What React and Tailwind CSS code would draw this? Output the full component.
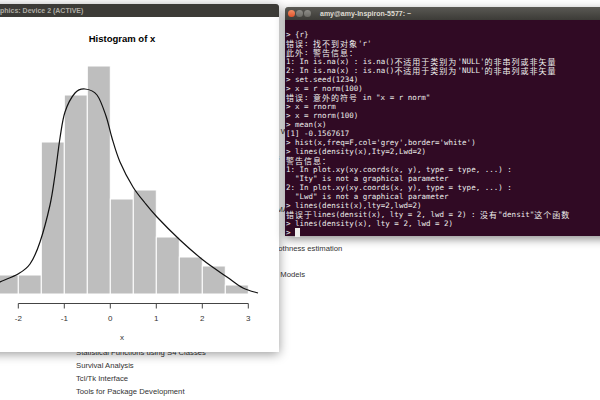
import React from "react";

// terminal scrollback, top to bottom
const termLines = [
  "> {r}",
  "错误: 找不到对象'r'",
  "此外: 警告信息：",
  "1: In is.na(x) : is.na()不适用于类别为'NULL'的非串列或非矢量",
  "2: In is.na(x) : is.na()不适用于类别为'NULL'的非串列或非矢量",
  "> set.seed(1234)",
  "> x = r norm(100)",
  '错误: 意外的符号 in "x = r norm"',
  "> x = rnorm",
  "> x = rnorm(100)",
  "> mean(x)",
  "[1] -0.1567617",
  "> hist(x,freq=F,col='grey',border='white')",
  "> lines(density(x),Ity=2,Lwd=2)",
  "警告信息：",
  "1: In plot.xy(xy.coords(x, y), type = type, ...) :",
  '  "Ity" is not a graphical parameter',
  "2: In plot.xy(xy.coords(x, y), type = type, ...) :",
  '  "Lwd" is not a graphical parameter',
  "> lines(densit(x),lty=2,lwd=2)",
  '错误于lines(densit(x), lty = 2, lwd = 2) : 没有"densit"这个函数',
  "> lines(density(x), lty = 2, lwd = 2)",
];

// R help index rows behind the windows
const helpRows = [
  "Read Data Stored by Minitab, S, SAS, SPSS, Stata, Systat, Weka, dBase",
  "The R Graphics Package",
  "The R Graphics Devices and Support for Colours and Fonts",
  "The Grid Graphics Package",
  "Functions for kernel smoothing",
  "Lattice Graphics",
  "Support Functions and Datasets for Venables and Ripley's MASS",
  "Sparse and Dense Matrix Classes and Methods",
  "Formal Methods and Classes",
  "Mixed GAM Computation Vehicle with GCV/AIC/REML smoothness estimation",
  "Linear and Nonlinear Mixed Effects Models",
  "Feed-Forward Neural Networks and Multinomial Log-Linear Models",
  "Support for Parallel computation in R",
  "Recursive Partitioning and Regression Trees",
  "Functions for Kriging and Point Pattern Analysis",
  "Regression Spline Functions and Classes",
  "The R Stats Package",
  "Statistical Functions using S4 Classes",
  "Survival Analysis",
  "Tcl/Tk Interface",
  "Tools for Package Development",
];

const CJK = /([\u3000-\u303f\u4e00-\u9fff\uff00-\uffef]+)/;

const X0 = 110.3;
const UNIT = 46;
const BASE = 294;
const sx = (v) => X0 + v * UNIT;

// [left break, bar top]
const bins = [
  [-2.5, 275], [-2, 275], [-1.5, 142], [-1, 95], [-0.5, 66], [0, 199],
  [0.5, 190], [1, 237], [1.5, 257], [2, 266], [2.5, 285],
];

const densityPts = [
  [-8, 287], [0, 282], [18, 274], [30, 264], [40, 242], [50, 205], [55, 175],
  [60, 138], [65, 112], [75, 93], [85, 89], [97, 95], [106, 116], [112, 138],
  [120, 162], [133, 187], [145, 203], [157, 217], [180, 240], [203, 260],
  [227, 277], [243, 288], [258, 293],
];

function smoothPath(pts) {
  let d = `M${pts[0][0]},${pts[0][1]}`;
  for (let i = 0; i < pts.length - 1; i++) {
    const p0 = pts[i - 1] || pts[i];
    const p1 = pts[i];
    const p2 = pts[i + 1];
    const p3 = pts[i + 2] || p2;
    const c1x = p1[0] + (p2[0] - p0[0]) / 6;
    const c1y = p1[1] + (p2[1] - p0[1]) / 6;
    const c2x = p2[0] - (p3[0] - p1[0]) / 6;
    const c2y = p2[1] - (p3[1] - p1[1]) / 6;
    d += ` C${c1x.toFixed(1)},${c1y.toFixed(1)} ${c2x.toFixed(1)},${c2y.toFixed(1)} ${p2[0]},${p2[1]}`;
  }
  return d;
}

function TermLine({ text, children }) {
  const parts = text.split(CJK);
  return (
    <div className="h-[9px] leading-[9px] whitespace-pre">
      {parts.map((p, i) =>
        i % 2 === 1 ? (
          <span
            key={i}
            className="align-top text-[8px] leading-[9px] tracking-[1px] font-['Noto_Sans_CJK_SC',sans-serif]"
          >
            {p}
          </span>
        ) : (
          <span key={i}>{p}</span>
        )
      )}
      {children}
    </div>
  );
}

function Histogram() {
  const curve = smoothPath(densityPts);
  return (
    <svg width="319" height="335" viewBox="-40 17 319 335" className="block">
      <text
        x="122"
        y="41.5"
        textAnchor="middle"
        fontSize="9.5"
        fontWeight="bold"
        fontFamily="Liberation Sans, Arial, sans-serif"
        fill="#000"
      >
        Histogram of x
      </text>
      {bins.map(([b, top]) => (
        <rect
          key={b}
          x={sx(b)}
          y={top}
          width={UNIT / 2}
          height={BASE - top}
          fill="#bebebe"
          stroke="#fff"
          strokeWidth="1"
        />
      ))}
      <path d={curve} fill="none" stroke="#111" strokeWidth="1.2" />
      <line x1={sx(-2)} x2={sx(3)} y1="303.5" y2="303.5" stroke="#444" strokeWidth="1" />
      {[-2, -1, 0, 1, 2, 3].map((t) => (
        <g key={t}>
          <line x1={sx(t)} x2={sx(t)} y1="303.5" y2="308.5" stroke="#444" strokeWidth="1" />
          <text
            x={sx(t)}
            y="321"
            textAnchor="middle"
            fontSize="8"
            fontFamily="Liberation Sans, Arial, sans-serif"
            fill="#333"
          >
            {t}
          </text>
        </g>
      ))}
      <text
        x="122"
        y="339.5"
        textAnchor="middle"
        fontSize="8"
        fontFamily="Liberation Sans, Arial, sans-serif"
        fill="#333"
      >
        x
      </text>
    </svg>
  );
}

export default function App() {
  return (
    <div className="relative w-[600px] h-[400px] overflow-hidden bg-white font-['Liberation_Sans',Arial,sans-serif]">
      {/* help page behind the windows */}
      <div className="pt-[125px] pl-[76px] text-[7.7px] text-[#333]">
        {helpRows.map((r) => (
          <div key={r} className="h-[13px] leading-[13px] whitespace-nowrap">
            {r}
          </div>
        ))}
      </div>

      {/* R graphics device window */}
      <div className="absolute left-[-40px] top-[4px] w-[319px] flex flex-col shadow-[0_2px_10px_rgba(0,0,0,0.4)]">
        <div className="h-[13px] bg-[#3c3b37] rounded-t-[3px] flex items-center pl-[21px]">
          <span className="text-[7px] font-bold text-[#aeaca4] whitespace-nowrap leading-none">
            R Graphics: Device 2 (ACTIVE)
          </span>
        </div>
        <div className="h-[335px] bg-white">
          <Histogram />
        </div>
      </div>

      {/* terminal window */}
      <div className="absolute left-[285px] top-[7px] w-[330px] flex flex-col shadow-[0_3px_9px_rgba(0,0,0,0.45)]">
        <div className="h-[13px] rounded-t-[3px] bg-gradient-to-b from-[#5a5954] to-[#3c3b37] flex items-center pl-[3px]">
          <div className="flex items-center gap-[1px]">
            <span className="w-[7px] h-[7px] rounded-full bg-gradient-to-b from-[#f28d63] to-[#e2512a]" />
            <span className="w-[7px] h-[7px] rounded-full bg-gradient-to-b from-[#8e8d88] to-[#6c6b66]" />
            <span className="w-[7px] h-[7px] rounded-full bg-gradient-to-b from-[#8e8d88] to-[#6c6b66]" />
          </div>
          <span className="ml-[9px] text-[7px] font-bold text-[#dfdbd2] whitespace-nowrap leading-none">
            amy@amy-Inspiron-5577: ~
          </span>
        </div>
        <div className="h-[216px] bg-[#300a24] pt-[10px] pl-[1px] text-[7.5px] text-[#eeeeec] font-['DejaVu_Sans_Mono',monospace]">
          {termLines.map((l, i) => (
            <TermLine key={i} text={l} />
          ))}
          <TermLine text="> ">
            <span className="inline-block w-[4.5px] h-[9px] bg-[#eeeeec] align-top" />
          </TermLine>
        </div>
      </div>
    </div>
  );
}
